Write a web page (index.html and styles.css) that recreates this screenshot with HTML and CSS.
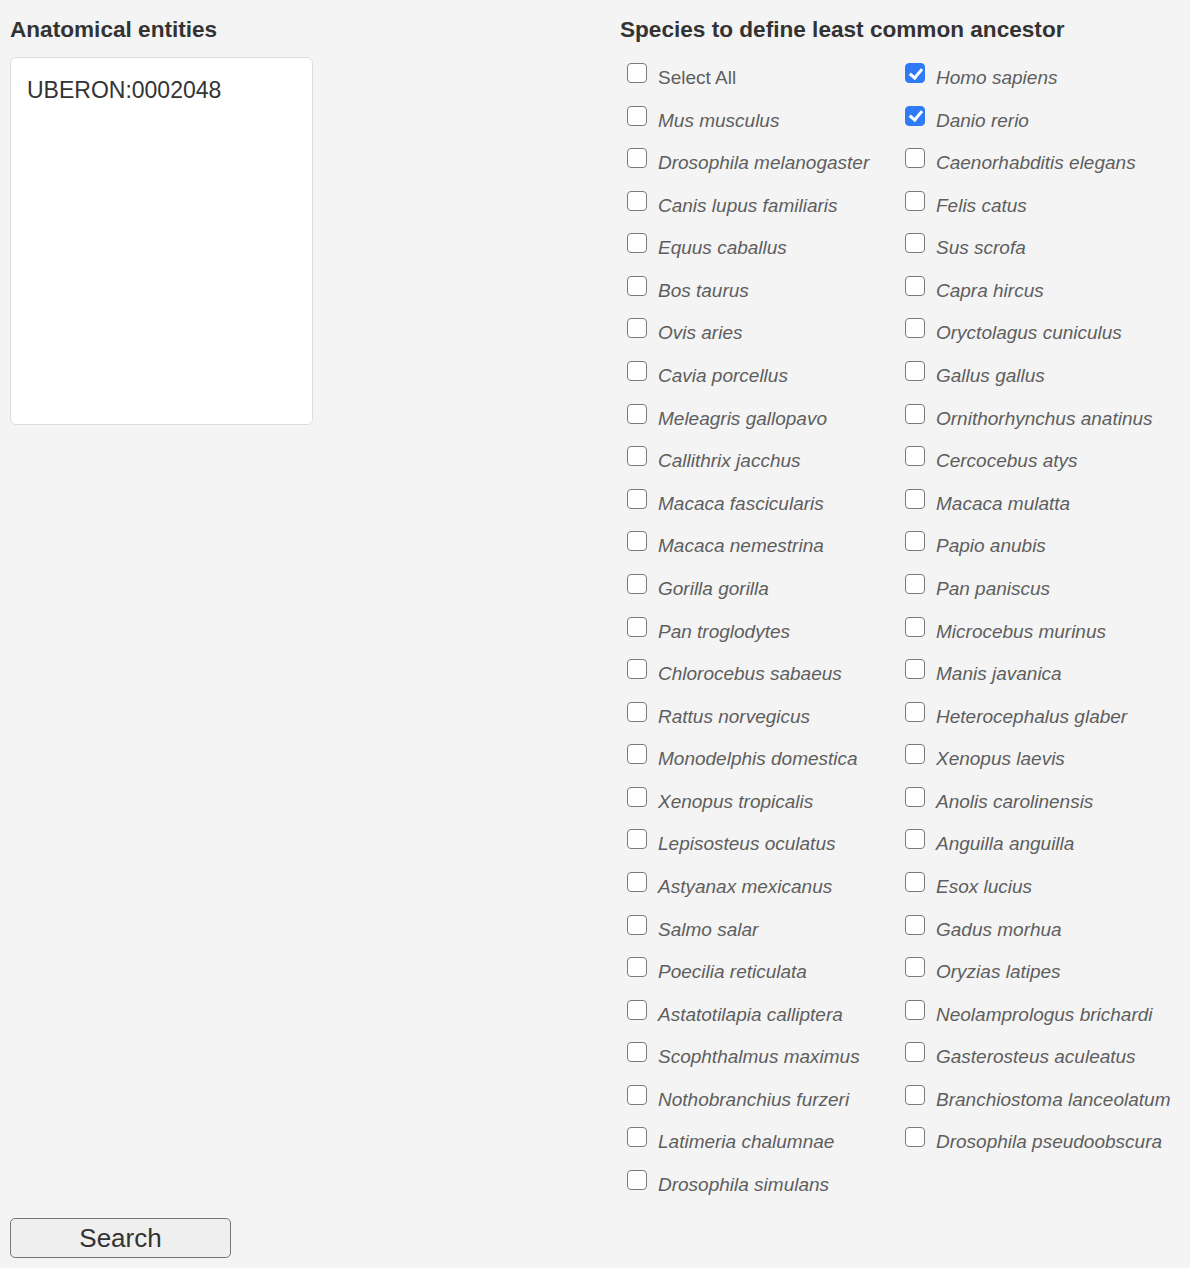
FILE: index.html
```html
<!DOCTYPE html>
<html>
<head>
<meta charset="utf-8">
<link rel="stylesheet" href="styles.css">
</head>
<body>
<div class="page">
  <div class="main">
    <section class="left">
      <h2 class="heading">Anatomical entities</h2>
      <div class="entities">UBERON:0002048</div>
    </section>
    <section class="right">
      <h2 class="heading">Species to define least common ancestor</h2>
      <div class="species">
        <label class="row"><span class="box"></span><span class="name plain">Select All</span></label>
        <label class="row"><span class="box checked"></span><span class="name">Homo sapiens</span></label>
        <label class="row"><span class="box"></span><span class="name">Mus musculus</span></label>
        <label class="row"><span class="box checked"></span><span class="name">Danio rerio</span></label>
        <label class="row"><span class="box"></span><span class="name">Drosophila melanogaster</span></label>
        <label class="row"><span class="box"></span><span class="name">Caenorhabditis elegans</span></label>
        <label class="row"><span class="box"></span><span class="name">Canis lupus familiaris</span></label>
        <label class="row"><span class="box"></span><span class="name">Felis catus</span></label>
        <label class="row"><span class="box"></span><span class="name">Equus caballus</span></label>
        <label class="row"><span class="box"></span><span class="name">Sus scrofa</span></label>
        <label class="row"><span class="box"></span><span class="name">Bos taurus</span></label>
        <label class="row"><span class="box"></span><span class="name">Capra hircus</span></label>
        <label class="row"><span class="box"></span><span class="name">Ovis aries</span></label>
        <label class="row"><span class="box"></span><span class="name">Oryctolagus cuniculus</span></label>
        <label class="row"><span class="box"></span><span class="name">Cavia porcellus</span></label>
        <label class="row"><span class="box"></span><span class="name">Gallus gallus</span></label>
        <label class="row"><span class="box"></span><span class="name">Meleagris gallopavo</span></label>
        <label class="row"><span class="box"></span><span class="name">Ornithorhynchus anatinus</span></label>
        <label class="row"><span class="box"></span><span class="name">Callithrix jacchus</span></label>
        <label class="row"><span class="box"></span><span class="name">Cercocebus atys</span></label>
        <label class="row"><span class="box"></span><span class="name">Macaca fascicularis</span></label>
        <label class="row"><span class="box"></span><span class="name">Macaca mulatta</span></label>
        <label class="row"><span class="box"></span><span class="name">Macaca nemestrina</span></label>
        <label class="row"><span class="box"></span><span class="name">Papio anubis</span></label>
        <label class="row"><span class="box"></span><span class="name">Gorilla gorilla</span></label>
        <label class="row"><span class="box"></span><span class="name">Pan paniscus</span></label>
        <label class="row"><span class="box"></span><span class="name">Pan troglodytes</span></label>
        <label class="row"><span class="box"></span><span class="name">Microcebus murinus</span></label>
        <label class="row"><span class="box"></span><span class="name">Chlorocebus sabaeus</span></label>
        <label class="row"><span class="box"></span><span class="name">Manis javanica</span></label>
        <label class="row"><span class="box"></span><span class="name">Rattus norvegicus</span></label>
        <label class="row"><span class="box"></span><span class="name">Heterocephalus glaber</span></label>
        <label class="row"><span class="box"></span><span class="name">Monodelphis domestica</span></label>
        <label class="row"><span class="box"></span><span class="name">Xenopus laevis</span></label>
        <label class="row"><span class="box"></span><span class="name">Xenopus tropicalis</span></label>
        <label class="row"><span class="box"></span><span class="name">Anolis carolinensis</span></label>
        <label class="row"><span class="box"></span><span class="name">Lepisosteus oculatus</span></label>
        <label class="row"><span class="box"></span><span class="name">Anguilla anguilla</span></label>
        <label class="row"><span class="box"></span><span class="name">Astyanax mexicanus</span></label>
        <label class="row"><span class="box"></span><span class="name">Esox lucius</span></label>
        <label class="row"><span class="box"></span><span class="name">Salmo salar</span></label>
        <label class="row"><span class="box"></span><span class="name">Gadus morhua</span></label>
        <label class="row"><span class="box"></span><span class="name">Poecilia reticulata</span></label>
        <label class="row"><span class="box"></span><span class="name">Oryzias latipes</span></label>
        <label class="row"><span class="box"></span><span class="name">Astatotilapia calliptera</span></label>
        <label class="row"><span class="box"></span><span class="name">Neolamprologus brichardi</span></label>
        <label class="row"><span class="box"></span><span class="name">Scophthalmus maximus</span></label>
        <label class="row"><span class="box"></span><span class="name">Gasterosteus aculeatus</span></label>
        <label class="row"><span class="box"></span><span class="name">Nothobranchius furzeri</span></label>
        <label class="row"><span class="box"></span><span class="name">Branchiostoma lanceolatum</span></label>
        <label class="row"><span class="box"></span><span class="name">Latimeria chalumnae</span></label>
        <label class="row"><span class="box"></span><span class="name">Drosophila pseudoobscura</span></label>
        <label class="row"><span class="box"></span><span class="name">Drosophila simulans</span></label>
      </div>
    </section>
  </div>
  <button class="search">Search</button>
</div>
</body>
</html>
```

FILE: styles.css
```css
html, body {
  margin: 0;
  padding: 0;
  background: #f4f4f4;
}
body {
  font-family: "Liberation Sans", Arial, sans-serif;
  color: #333;
}
.page {
  padding: 17px 10px 0 10px;
  display: flex;
  flex-direction: column;
  align-items: flex-start;
}
.main {
  display: flex;
  width: 100%;
}
.left {
  width: 610px;
  flex: none;
}
.right {
  flex: 1;
}
.heading {
  margin: 0 0 14px 0;
  font-size: 22.6px;
  line-height: 26px;
  font-weight: bold;
  color: #333;
}
.entities {
  box-sizing: border-box;
  width: 303px;
  height: 368px;
  background: #fff;
  border: 1px solid #dcdcdc;
  border-radius: 6px;
  padding: 17px 16px 16px 16px;
  font-size: 23px;
  line-height: 31px;
  color: #333;
}
.species {
  display: grid;
  grid-template-columns: 278px 278px;
  grid-auto-rows: 42.58px;
}
.row {
  display: flex;
  align-items: flex-start;
  padding-left: 7px;
}
.box {
  box-sizing: border-box;
  flex: none;
  width: 20px;
  height: 20px;
  margin-top: 6px;
  border: 1.5px solid #7a7a7a;
  border-radius: 4px;
  background: #fff;
  position: relative;
}
.box.checked {
  background: #2f7bf5;
  border-color: #2f7bf5;
}
.box.checked::after {
  content: "";
  position: absolute;
  left: 5.5px;
  top: 1.5px;
  width: 5px;
  height: 10px;
  border: solid #fff;
  border-width: 0 3px 3px 0;
  transform: rotate(40deg);
}
.name {
  margin-left: 11px;
  margin-top: 9px;
  font-size: 19px;
  line-height: 24px;
  font-style: italic;
  color: #5e5e5e;
  white-space: nowrap;
}
.name.plain {
  font-style: normal;
}
.search {
  margin-top: 11px;
  width: 221px;
  height: 40px;
  background: #efefef;
  border: 1px solid #767676;
  border-radius: 5px;
  font-family: "Liberation Sans", Arial, sans-serif;
  font-size: 26px;
  color: #333;
  padding: 0;
  line-height: 38px;
}
```
